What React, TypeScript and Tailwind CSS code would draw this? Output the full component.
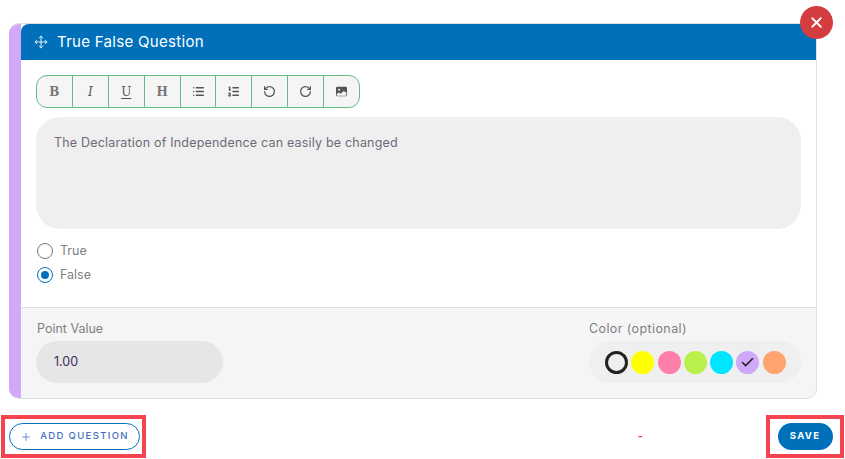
import { Check, List, ListOrdered, Move, Plus, RotateCcw, RotateCw, X } from "lucide-react";
import { BsImageFill } from "react-icons/bs";

const font = "font-['Inter','Liberation_Sans',sans-serif]";

const tools = [
  <span className="font-['DejaVu_Serif',serif] text-[12px] font-bold text-[#777777]">B</span>,
  <span className="font-['DejaVu_Serif',serif] text-[12px] italic">I</span>,
  <span className="font-['DejaVu_Serif',serif] text-[12px] underline underline-offset-2">U</span>,
  <span className="font-['DejaVu_Serif',serif] text-[12px] font-bold text-[#777777]">H</span>,
  <List size={13} strokeWidth={2.5} />,
  <ListOrdered size={13} strokeWidth={2.5} />,
  <RotateCcw size={13} strokeWidth={2.25} />,
  <RotateCw size={13} strokeWidth={2.25} />,
  <BsImageFill size={11} />,
];

const colors = [
  "bg-transparent border-[3px] border-[#222222]",
  "bg-[#ffff00]",
  "bg-[#ff7fa8]",
  "bg-[#b9f04c]",
  "bg-[#00e5ff]",
  "bg-[#d0a8f8]",
  "bg-[#ffa46e]",
];

export default function App() {
  return (
    <div className={`${font} relative h-[459px] w-[845px] overflow-hidden bg-white pl-[9px] pt-[23px]`}>
      <div className="flex h-[376px] w-[808px] overflow-hidden rounded-[10px] border border-[#e0e0e0] border-l-0">
        <div className="w-[12px] shrink-0 bg-[#d0aaf9]" />
        <div className="flex min-w-0 flex-1 flex-col">
          <div className="flex h-[36px] shrink-0 items-center gap-[9px] rounded-tl-[8px] bg-[#0070bb] pl-[13px] text-white">
            <Move size={14} strokeWidth={1.5} />
            <span className="text-[15px] font-normal tracking-[0.3px]">True False Question</span>
          </div>

          <div className="flex flex-1 flex-col px-[15px] pt-[15px]">
            <div className="flex h-[33px] w-[324px] overflow-hidden rounded-[11px] border border-[#66bb88] bg-[#f5f5f5] text-[#555555]">
              {tools.map((tool, i) => (
                <div
                  key={i}
                  className="flex flex-1 items-center justify-center border-r border-[#66bb88] last:border-r-0"
                >
                  {tool}
                </div>
              ))}
            </div>

            <div className="mt-[9px] h-[112px] w-[765px] rounded-[24px] bg-[#efefef] px-[18px] py-[17px] text-[12.5px] leading-[18px] tracking-[0.19px] text-[#6f6a78]">
              The Declaration of Independence can easily be changed
            </div>

            <div className="mt-[14px] flex items-center gap-[7px] pl-[1px] text-[12.5px] leading-[16px] text-[#808080]">
              <span className="h-[16px] w-[16px] rounded-full border-[1.5px] border-[#777777]" />
              True
            </div>
            <div className="mt-[8px] flex items-center gap-[7px] pl-[1px] text-[12.5px] leading-[16px] text-[#808080]">
              <span className="flex h-[16px] w-[16px] items-center justify-center rounded-full border-[1.5px] border-[#0070bb]">
                <span className="h-[8px] w-[8px] rounded-full bg-[#0070bb]" />
              </span>
              False
            </div>
          </div>

          <div className="flex h-[91px] shrink-0 justify-between border-t border-[#e0e0e0] bg-[#f5f5f5] pl-[15px] pr-[15px] pt-[13px]">
            <div>
              <div className="pl-[1px] text-[12.5px] leading-[16px] text-[#808080]">Point Value</div>
              <div className="mt-[4px] flex h-[42px] w-[187px] items-center rounded-full bg-[#e6e6e6] pl-[18px] text-[12.5px] text-[#3a2f5c]">
                1.00
              </div>
            </div>
            <div>
              <div className="text-[12.5px] leading-[16px] tracking-[0.4px] text-[#808080]">Color (optional)</div>
              <div className="mt-[4px] flex h-[42px] w-[212px] items-center gap-[3.3px] rounded-full bg-[#efefef] pl-[16px]">
                {colors.map((c, i) => (
                  <span key={i} className={`flex h-[23px] w-[23px] items-center justify-center rounded-full ${c}`}>
                    {i === 5 && <Check size={15} strokeWidth={2.5} className="text-[#222222]" />}
                  </span>
                ))}
              </div>
            </div>
          </div>
        </div>
      </div>

      <div className="mt-[16px] flex h-[43px] items-center justify-between">
        <div className="-ml-[8px] flex h-[43px] w-[145px] items-center border-[4px] border-[#f44450] pl-[4px]">
          <div className="flex h-[27px] w-[131px] items-center justify-center gap-[8px] rounded-full border border-[#0070bb] text-[9.5px] font-medium tracking-[1.35px] text-[#3f6fc0]">
            <Plus size={12} strokeWidth={1.5} />
            ADD QUESTION
          </div>
        </div>
        <div className="mr-[1px] ml-auto flex items-center">
          <span className="mr-[123px] text-[11px] font-bold leading-none text-[#f44450]">-</span>
          <div className="flex h-[43px] w-[78px] items-center justify-center border-[4px] border-[#f44450]">
            <div className="flex h-[27px] w-[55px] items-center justify-center rounded-full bg-[#0070bb] text-[9.5px] font-bold tracking-[1.3px] text-white">
              SAVE
            </div>
          </div>
        </div>
      </div>

      <div className="absolute left-[800px] top-[6px] flex h-[33px] w-[33px] items-center justify-center rounded-full bg-[#d33d3f] text-white">
        <X size={17} strokeWidth={2.5} />
      </div>
    </div>
  );
}
